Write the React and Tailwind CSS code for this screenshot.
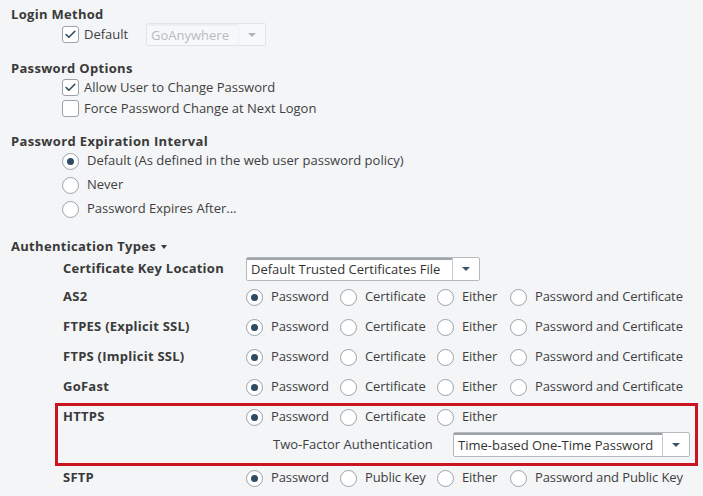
import { Check } from 'lucide-react'

const FONT = { fontFamily: '"Open Sans", "Liberation Sans", sans-serif' }

function Checkbox({ checked }) {
  return (
    <span className="flex h-[17px] w-[17px] items-center justify-center rounded-[3px] border border-[#9aa3ab] bg-white">
      {checked && <Check size={13} strokeWidth={3} className="text-[#2c4a5e]" />}
    </span>
  )
}

function Radio({ checked }) {
  return (
    <span className="flex h-[17px] w-[17px] shrink-0 items-center justify-center rounded-full border border-[#9aa3ab] bg-white">
      {checked && <span className="h-[7px] w-[7px] rounded-full bg-[#2d4b62]" />}
    </span>
  )
}

function Arrow() {
  return <span className="h-0 w-0 border-x-[4px] border-t-[4px] border-x-transparent border-t-[#3c5466]" />
}

function Select({ value, width, disabled }) {
  return (
    <div
      className={`flex h-full items-stretch rounded-[2px] border ${disabled ? 'border-[#e2e5e8] bg-[#f7f8f9]' : 'border-[#b3b8bd] bg-white'}`}
      style={{ width }}
    >
      <div className={`flex flex-1 items-center border-t-2 px-[4px] ${disabled ? 'border-t-[#eceef0] text-[#b7bcc0]' : 'border-t-[#a0a4a8] text-[#333]'}`}>
        {value}
      </div>
      <div className={`flex w-[27px] items-center justify-center border-l ${disabled ? 'border-l-[#e2e5e8] opacity-40' : 'border-l-[#c7ccd0]'}`}>
        <Arrow />
      </div>
    </div>
  )
}

function Option({ checked, label, w }) {
  return (
    <div className="flex items-center gap-[8px]" style={{ width: w }}>
      <Radio checked={checked} />
      <span>{label}</span>
    </div>
  )
}

const ROWS = [
  ['AS2', ['Password', 'Certificate', 'Either', 'Password and Certificate']],
  ['FTPES (Explicit SSL)', ['Password', 'Certificate', 'Either', 'Password and Certificate']],
  ['FTPS (Implicit SSL)', ['Password', 'Certificate', 'Either', 'Password and Certificate']],
  ['GoFast', ['Password', 'Certificate', 'Either', 'Password and Certificate']],
]

const COLS = [94, 97, 73]

function Options({ labels }) {
  return (
    <div className="flex items-center tracking-[-0.1px]">
      {labels.map((l, i) => (
        <Option key={l} checked={i === 0} label={l} w={COLS[i]} />
      ))}
    </div>
  )
}

export default function App() {
  return (
    <div className="h-[496px] w-[703px] overflow-hidden bg-[#f3f5f7] pl-[11px] pt-[7px] text-[13px] text-[#3f3f3f]" style={FONT}>
      <div className="flex h-[16px] items-center font-bold tracking-[0.3px] text-[#3a3a3a]">Login Method</div>
      <div className="flex h-[23px] items-center pl-[51px]">
        <Checkbox checked />
        <span className="ml-[5px] w-[62px]">Default</span>
        <div className="h-[23px]">
          <Select value="GoAnywhere" width={120} disabled />
        </div>
      </div>

      <div className="mt-[15px] flex h-[16px] items-center font-bold tracking-[0.3px] text-[#3a3a3a]">Password Options</div>
      <div className="flex h-[21px] items-center gap-[5px] pl-[51px]">
        <Checkbox checked />
        <span>Allow User to Change Password</span>
      </div>
      <div className="flex h-[21px] items-center gap-[5px] pl-[51px]">
        <Checkbox />
        <span>Force Password Change at Next Logon</span>
      </div>

      <div className="mt-[15px] flex h-[15px] items-center font-bold tracking-[0.35px] text-[#3a3a3a]">Password Expiration Interval</div>
      {['Default (As defined in the web user password policy)', 'Never', 'Password Expires After...'].map((l, i) => (
        <div key={l} className="flex h-[24px] items-center gap-[8px] pl-[51px]">
          <Radio checked={i === 0} />
          <span>{l}</span>
        </div>
      ))}

      <div className="mt-[18px] flex h-[16px] items-center gap-[5px] font-bold tracking-[0.3px] text-[#3a3a3a]">
        Authentication Types
        <span className="h-0 w-0 border-x-[3px] border-t-[4px] border-x-transparent border-t-[#3a3a3a]" />
      </div>

      <div className="mt-[2px] flex h-[24px] items-center pl-[52px]">
        <span className="w-[183px] font-bold tracking-[0.25px] text-[#3a3a3a]">Certificate Key Location</span>
        <div className="h-[24px]">
          <Select value="Default Trusted Certificates File" width={234} />
        </div>
      </div>

      <div className="mt-[1px]">
        {ROWS.map(([name, labels]) => (
          <div key={name} className="flex h-[30px] items-center pl-[52px]">
            <span className="w-[183px] font-bold tracking-[0.25px] text-[#3a3a3a]">{name}</span>
            <Options labels={labels} />
          </div>
        ))}
      </div>

      <div className="ml-[44px] mr-[5px] mt-[1px] border-[3px] border-[#c8151f] pl-[5px]">
        <div className="flex h-[22px] items-center">
          <span className="w-[183px] font-bold tracking-[0.25px] text-[#3a3a3a]">HTTPS</span>
          <Options labels={['Password', 'Certificate', 'Either']} />
        </div>
        <div className="flex h-[35px] items-start pl-[210px] pt-[4px]">
          <span className="flex h-[25px] w-[180px] items-center">Two-Factor Authentication</span>
          <div className="h-[25px]">
            <Select value="Time-based One-Time Password" width={237} />
          </div>
        </div>
      </div>

      <div className="flex h-[24px] items-center pl-[52px]">
        <span className="w-[183px] font-bold tracking-[0.25px] text-[#3a3a3a]">SFTP</span>
        <Options labels={['Password', 'Public Key', 'Either', 'Password and Public Key']} />
      </div>
    </div>
  )
}
